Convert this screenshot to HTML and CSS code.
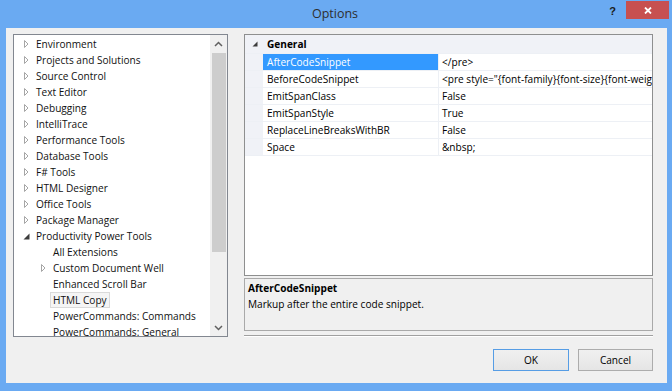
FILE: index.html
```html
<!DOCTYPE html>
<html>
<head>
<meta charset="utf-8">
<title>Options</title>
<link rel="stylesheet" href="styles.css">
</head>
<body>
<div class="window">
  <div class="titlebar">
    <div class="tb-side"></div>
    <div class="title">Options</div>
    <div class="tb-side tb-right">
      <span class="help">?</span>
      <span class="close"><svg width="8" height="7" viewBox="0 0 8 7"><path d="M1 0.5 L7 6.5 M7 0.5 L1 6.5" stroke="#fff" stroke-width="1.8" fill="none"/></svg></span>
    </div>
  </div>
  <div class="client">
    <div class="main">
      <div class="tree">
        <div class="tree-list">
          <div class="node"><span class="exp"><svg width="17" height="16" viewBox="0 0 17 16"><path d="M8.5 4.5 L12 8 L8.5 11.5 Z" fill="none" stroke="#a6a6a6"/></svg></span><span class="label">Environment</span></div>
          <div class="node"><span class="exp"><svg width="17" height="16" viewBox="0 0 17 16"><path d="M8.5 4.5 L12 8 L8.5 11.5 Z" fill="none" stroke="#a6a6a6"/></svg></span><span class="label">Projects and Solutions</span></div>
          <div class="node"><span class="exp"><svg width="17" height="16" viewBox="0 0 17 16"><path d="M8.5 4.5 L12 8 L8.5 11.5 Z" fill="none" stroke="#a6a6a6"/></svg></span><span class="label">Source Control</span></div>
          <div class="node"><span class="exp"><svg width="17" height="16" viewBox="0 0 17 16"><path d="M8.5 4.5 L12 8 L8.5 11.5 Z" fill="none" stroke="#a6a6a6"/></svg></span><span class="label">Text Editor</span></div>
          <div class="node"><span class="exp"><svg width="17" height="16" viewBox="0 0 17 16"><path d="M8.5 4.5 L12 8 L8.5 11.5 Z" fill="none" stroke="#a6a6a6"/></svg></span><span class="label">Debugging</span></div>
          <div class="node"><span class="exp"><svg width="17" height="16" viewBox="0 0 17 16"><path d="M8.5 4.5 L12 8 L8.5 11.5 Z" fill="none" stroke="#a6a6a6"/></svg></span><span class="label">IntelliTrace</span></div>
          <div class="node"><span class="exp"><svg width="17" height="16" viewBox="0 0 17 16"><path d="M8.5 4.5 L12 8 L8.5 11.5 Z" fill="none" stroke="#a6a6a6"/></svg></span><span class="label">Performance Tools</span></div>
          <div class="node"><span class="exp"><svg width="17" height="16" viewBox="0 0 17 16"><path d="M8.5 4.5 L12 8 L8.5 11.5 Z" fill="none" stroke="#a6a6a6"/></svg></span><span class="label">Database Tools</span></div>
          <div class="node"><span class="exp"><svg width="17" height="16" viewBox="0 0 17 16"><path d="M8.5 4.5 L12 8 L8.5 11.5 Z" fill="none" stroke="#a6a6a6"/></svg></span><span class="label">F# Tools</span></div>
          <div class="node"><span class="exp"><svg width="17" height="16" viewBox="0 0 17 16"><path d="M8.5 4.5 L12 8 L8.5 11.5 Z" fill="none" stroke="#a6a6a6"/></svg></span><span class="label">HTML Designer</span></div>
          <div class="node"><span class="exp"><svg width="17" height="16" viewBox="0 0 17 16"><path d="M8.5 4.5 L12 8 L8.5 11.5 Z" fill="none" stroke="#a6a6a6"/></svg></span><span class="label">Office Tools</span></div>
          <div class="node"><span class="exp"><svg width="17" height="16" viewBox="0 0 17 16"><path d="M8.5 4.5 L12 8 L8.5 11.5 Z" fill="none" stroke="#a6a6a6"/></svg></span><span class="label">Package Manager</span></div>
          <div class="node"><span class="exp"><svg width="17" height="16" viewBox="0 0 17 16"><path d="M13.5 5.5 L13.5 11.5 L7.5 11.5 Z" fill="#3c3c3c"/></svg></span><span class="label">Productivity Power Tools</span></div>
          <div class="node lvl1"><span class="exp"></span><span class="label">All Extensions</span></div>
          <div class="node lvl1"><span class="exp"><svg width="17" height="16" viewBox="0 0 17 16"><path d="M8.5 4.5 L12 8 L8.5 11.5 Z" fill="none" stroke="#a6a6a6"/></svg></span><span class="label">Custom Document Well</span></div>
          <div class="node lvl1"><span class="exp"></span><span class="label">Enhanced Scroll Bar</span></div>
          <div class="node lvl1"><span class="exp"></span><span class="label selected">HTML Copy</span></div>
          <div class="node lvl1"><span class="exp"></span><span class="label">PowerCommands: Commands</span></div>
          <div class="node lvl1"><span class="exp"></span><span class="label">PowerCommands: General</span></div>
        </div>
        <div class="vscroll">
          <div class="sb-btn"><svg width="9" height="6" viewBox="0 0 9 6"><path d="M1 5 L4.5 1.5 L8 5" fill="none" stroke="#606060" stroke-width="1.5"/></svg></div>
          <div class="sb-track"><div class="sb-thumb"></div></div>
          <div class="sb-btn"><svg width="9" height="6" viewBox="0 0 9 6"><path d="M1 1 L4.5 4.5 L8 1" fill="none" stroke="#606060" stroke-width="1.5"/></svg></div>
        </div>
      </div>
      <div class="right">
        <div class="grid">
          <div class="cat">
            <span class="cat-exp"><svg width="18" height="18" viewBox="0 0 18 18"><path d="M12.5 6.5 L12.5 11.5 L7.5 11.5 Z" fill="#3c3c3c"/></svg></span>
            <span class="cat-name">General</span>
          </div>
          <div class="prop selected"><span class="margin"></span><span class="pname">AfterCodeSnippet</span><span class="pval">&lt;/pre&gt;</span></div>
          <div class="prop"><span class="margin"></span><span class="pname">BeforeCodeSnippet</span><span class="pval">&lt;pre style="{font-family}{font-size}{font-weight}{font-style}{color}{background-color}"&gt;</span></div>
          <div class="prop"><span class="margin"></span><span class="pname">EmitSpanClass</span><span class="pval">False</span></div>
          <div class="prop"><span class="margin"></span><span class="pname">EmitSpanStyle</span><span class="pval">True</span></div>
          <div class="prop"><span class="margin"></span><span class="pname">ReplaceLineBreaksWithBR</span><span class="pval">False</span></div>
          <div class="prop last"><span class="margin"></span><span class="pname">Space</span><span class="pval">&amp;nbsp;</span></div>
        </div>
        <div class="desc">
          <div class="desc-title">AfterCodeSnippet</div>
          <div class="desc-text">Markup after the entire code snippet.</div>
        </div>
        <div class="sep"></div>
      </div>
    </div>
    <div class="buttons">
      <button class="btn btn-default">OK</button>
      <button class="btn btn-cancel">Cancel</button>
    </div>
  </div>
</div>
</body>
</html>
```

FILE: styles.css
```css
html, body {
  margin: 0;
  padding: 0;
}
body {
  width: 672px;
  height: 391px;
  overflow: hidden;
  font-family: "Open Sans", "Noto Sans", sans-serif;
  font-size: 10.1px;
  font-weight: 500;
  color: #000;
}
.window {
  width: 672px;
  height: 391px;
  background: #6aaaf2;
  display: flex;
  flex-direction: column;
  box-sizing: border-box;
}
.titlebar {
  height: 28px;
  flex: none;
  display: grid;
  grid-template-columns: 1fr auto 1fr;
}
.title {
  font-size: 12.5px;
  font-weight: 400;
  color: #2e2e2e;
  line-height: 28px;
  padding-right: 2px;
}
.tb-right {
  display: flex;
  justify-content: flex-end;
  align-items: flex-start;
}
.help {
  font-family: "Liberation Sans", sans-serif;
  font-weight: bold;
  font-size: 11px;
  line-height: 11px;
  color: #1a1a1a;
  margin-top: 6px;
  margin-right: 10px;
}
.close {
  width: 43px;
  height: 18px;
  margin-top: 1px;
  margin-right: 3px;
  background: #c75050;
  display: flex;
  align-items: center;
  justify-content: center;
}
.client {
  flex: 1;
  margin: 0 5px 8px 6px;
  background: #f0f0f0;
  padding: 6px 14px 12px 7px;
  display: flex;
  flex-direction: column;
}
.main {
  display: flex;
  gap: 16px;
  height: 303px;
}
.tree {
  width: 215px;
  height: 303px;
  box-sizing: border-box;
  border: 1px solid #828790;
  background: #fff;
  display: flex;
}
.tree-list {
  flex: 1;
  overflow: hidden;
  padding-top: 1px;
}
.node {
  height: 16px;
  display: flex;
  align-items: center;
  padding-left: 2px;
  white-space: nowrap;
}
.node.lvl1 {
  padding-left: 19px;
}
.exp {
  width: 17px;
  height: 16px;
  flex: none;
  display: block;
}
.exp svg {
  display: block;
}
.label {
  border: 1px solid transparent;
  padding: 0 2px;
  line-height: 14px;
  color: #111;
}
.label.selected {
  border-color: #dadada;
  background: #f5f5f5;
}
.vscroll {
  width: 17px;
  flex: none;
  background: #f0f0f0;
  display: flex;
  flex-direction: column;
}
.sb-btn {
  height: 17px;
  flex: none;
  display: flex;
  align-items: center;
  justify-content: center;
}
.sb-track {
  flex: 1;
  padding: 1px 1px 0 2px;
}
.sb-thumb {
  height: 199px;
  background: #cdcdcd;
}
.right {
  width: 409px;
  display: flex;
  flex-direction: column;
}
.grid {
  height: 242px;
  box-sizing: border-box;
  border: 1px solid #8e8f8f;
  background: #fff;
  overflow: hidden;
}
.cat {
  height: 18px;
  background: #f0f2f7;
  display: flex;
  align-items: center;
}
.cat-exp {
  width: 18px;
  height: 18px;
  flex: none;
}
.cat-exp svg {
  display: block;
}
.cat-name {
  font-weight: bold;
  padding-left: 4px;
  line-height: 18px;
}
.prop {
  display: grid;
  grid-template-columns: 18px 176px 1fr;
  height: 16px;
  border-top: 1px solid #edf0f5;
  line-height: 16px;
  white-space: nowrap;
}
.prop.last {
  border-bottom: 1px solid #edf0f5;
}
.margin {
  background: #f0f2f7;
}
.pname {
  padding-left: 4px;
  overflow: hidden;
  border-right: 1px solid #edf0f5;
}
.prop.selected .pname {
  background: #3399ff;
  color: #fff;
}
.pval {
  padding-left: 3px;
  overflow: hidden;
}
.desc {
  margin-top: 2px;
  height: 53px;
  box-sizing: border-box;
  border: 1px solid #a9a9a9;
  background: #f0f0f0;
  padding: 1px 0 0 3px;
  line-height: 16px;
}
.desc-title {
  font-weight: bold;
}
.sep {
  margin-top: 4px;
  border-top: 1px solid #a0a0a0;
  border-bottom: 1px solid #fff;
}
.buttons {
  margin-top: 12px;
  display: flex;
  justify-content: flex-end;
  gap: 9px;
}
.btn {
  font-family: "Open Sans", "Noto Sans", sans-serif;
  font-size: 10.1px;
  font-weight: 500;
  color: #000;
  height: 22px;
  padding: 0;
  box-sizing: border-box;
  border: 1px solid #acacac;
  background: linear-gradient(#f0f0f0, #e5e5e5);
  border-radius: 0;
}
.btn-default {
  width: 76px;
  border-color: #569de5;
}
.btn-cancel {
  width: 75px;
}
```
